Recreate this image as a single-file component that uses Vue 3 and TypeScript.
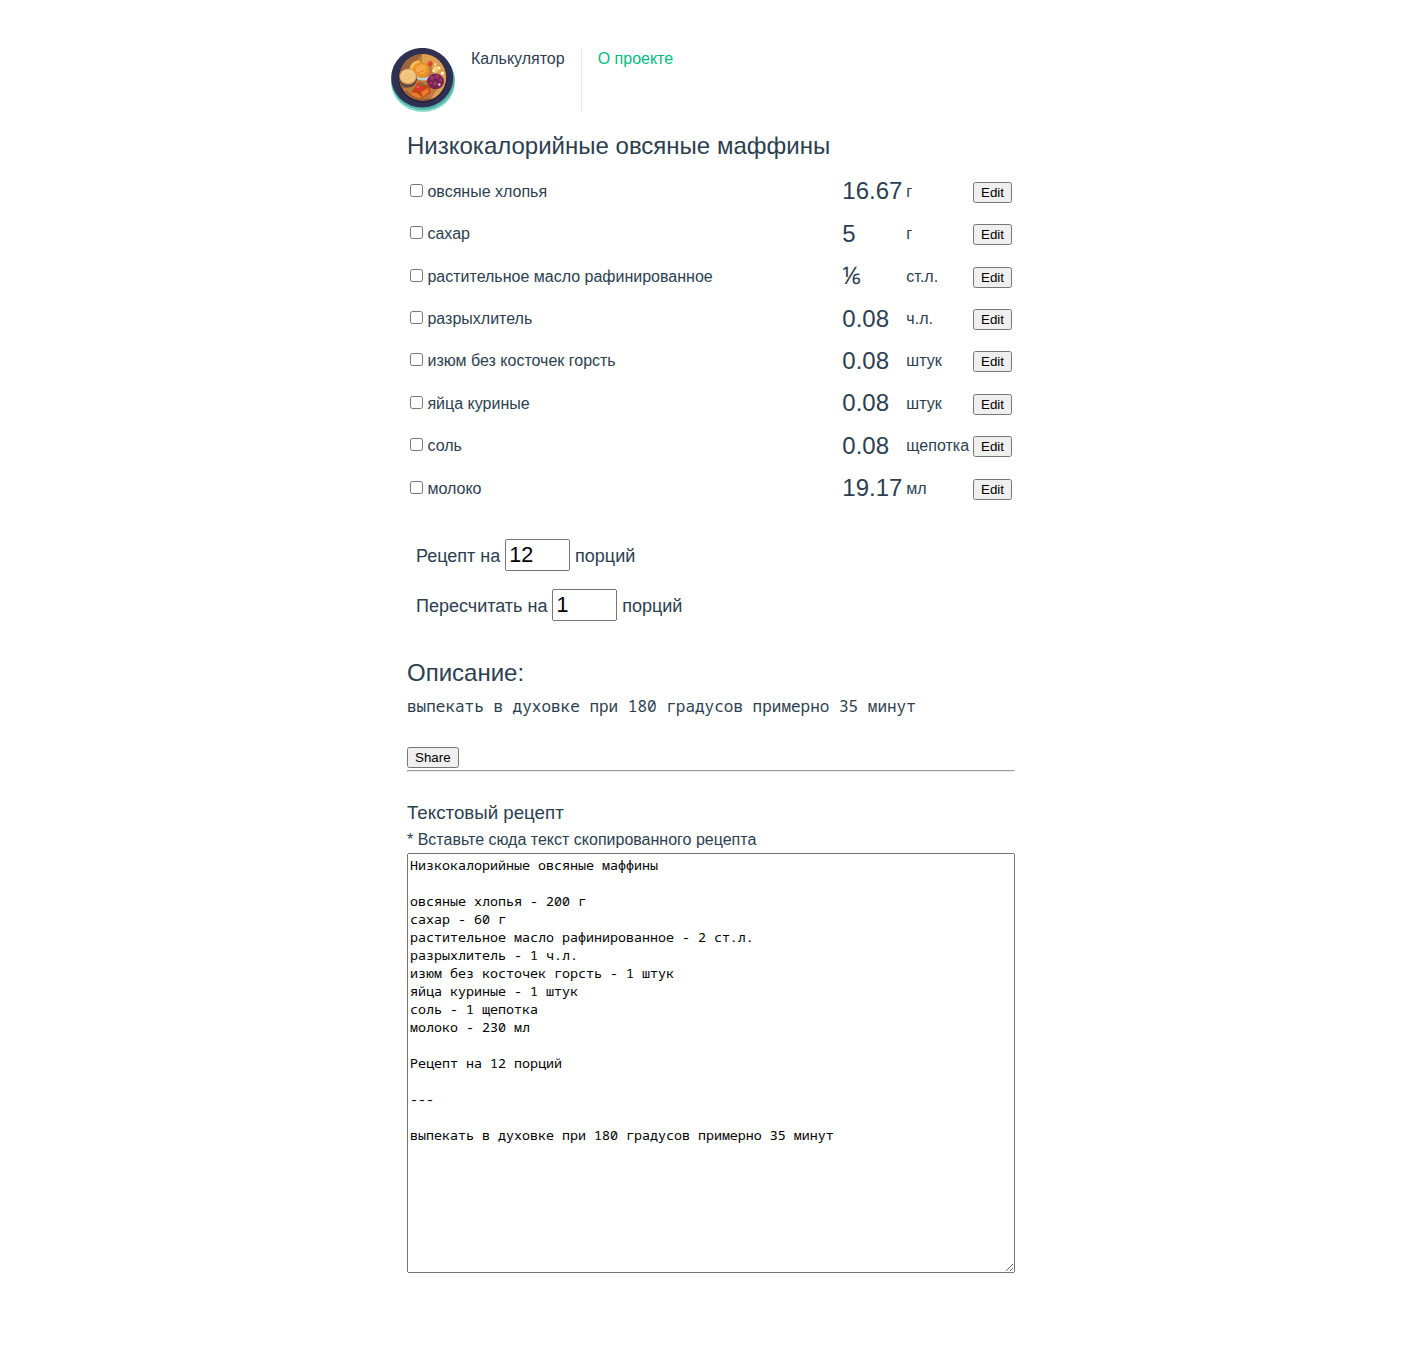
<script setup lang="ts">
import { ref } from 'vue'

interface Ingredient {
  name: string
  amount: string
  unit: string
}

const title = 'Низкокалорийные овсяные маффины'
const description = 'выпекать в духовке при 180 градусов примерно 35 минут'

const ingredients: Ingredient[] = [
  { name: 'овсяные хлопья', amount: '16.67', unit: 'г' },
  { name: 'сахар', amount: '5', unit: 'г' },
  { name: 'растительное масло рафинированное', amount: '⅙', unit: 'ст.л.' },
  { name: 'разрыхлитель', amount: '0.08', unit: 'ч.л.' },
  { name: 'изюм без косточек горсть', amount: '0.08', unit: 'штук' },
  { name: 'яйца куриные', amount: '0.08', unit: 'штук' },
  { name: 'соль', amount: '0.08', unit: 'щепотка' },
  { name: 'молоко', amount: '19.17', unit: 'мл' },
]

const portions = ref(12)
const target = ref(1)

const source = ref(`${title}

овсяные хлопья - 200 г
сахар - 60 г
растительное масло рафинированное - 2 ст.л.
разрыхлитель - 1 ч.л.
изюм без косточек горсть - 1 штук
яйца куриные - 1 штук
соль - 1 щепотка
молоко - 230 мл

Рецепт на 12 порций

---

${description}`)
</script>

<template>
  <div class="page">
    <header class="header">
      <svg class="logo" viewBox="0 0 64 64" aria-hidden="true">
        <defs>
          <clipPath id="board"><circle cx="31.7" cy="29.4" r="23.4" /></clipPath>
        </defs>
        <ellipse cx="32" cy="34" rx="32" ry="30" fill="#8fdccd" />
        <ellipse cx="32" cy="32" rx="31.8" ry="30" fill="#54b5aa" />
        <ellipse cx="31.2" cy="29.7" rx="31" ry="29.8" fill="#303052" />
        <circle cx="31.7" cy="30.4" r="24.4" fill="#28243f" />
        <g clip-path="url(#board)">
          <rect width="64" height="64" fill="#bd7b3f" />
          <path d="M8 6h23L20 20l-3 20H8z" fill="#9c6540" />
          <path d="M31 5v9l10 4 8 18-10 17h20V5z" fill="#dfa052" />
          <path d="M15 43q8 11 24 8" stroke="#a05c31" stroke-width="2" fill="none" />
        </g>
        <path d="M18 22q1-9 10-10l3 3-7 4-2 4z" fill="#f0a536" />
        <path d="M20 20q2-6 8-6" stroke="#ffca63" stroke-width="1.4" fill="none" />
        <path d="M23 25q8 10 21-1l-1 5q-8 6-17 2z" fill="#bdd5d6" />
        <circle cx="30.6" cy="22" r="7.7" fill="#ed922b" />
        <path d="M24.5 20q5-6 10-2 2 6-3 8-6 0-7-6z" fill="#f6aa43" />
        <path d="M27 25l7-3" stroke="#df8528" fill="none" />
        <ellipse cx="17" cy="31" rx="9" ry="8.6" fill="#614641" />
        <ellipse cx="17" cy="28.7" rx="8.6" ry="7.7" fill="#d99c58" />
        <ellipse cx="17" cy="28.2" rx="7.7" ry="6.9" fill="#f3c783" />
        <path d="M12 29l7-4M14 32l8-4" stroke="#e8b76e" stroke-width=".8" />
        <circle cx="39.2" cy="15.5" r="2.5" fill="#d94327" />
        <circle cx="38.5" cy="14.6" r=".7" fill="#ff9272" />
        <path d="M42 19l4-1 2 3-3 4-4-1z" fill="#f7ce6a" />
        <g fill="#fff0dc">
          <circle cx="44.2" cy="16.3" r="1.1" /><circle cx="48" cy="20" r="1.5" />
          <circle cx="51.4" cy="25.2" r="1.6" /><circle cx="42.6" cy="22.6" r="1.1" />
        </g>
        <ellipse cx="44.5" cy="33.4" rx="8.5" ry="7.8" fill="#78244f" />
        <g fill="#a13a6c">
          <circle cx="41" cy="30" r="2" /><circle cx="46" cy="28.5" r="1.9" />
          <circle cx="44" cy="35.5" r="2" /><circle cx="49.5" cy="32" r="1.6" />
          <circle cx="39.8" cy="35" r="1.3" />
        </g>
        <circle cx="48.3" cy="36.6" r="1.3" fill="#e9bddb" />
        <path d="M19.5 45l8-10 11 3 1 7-8 5q-6-2-12-5z" fill="#bd461d" />
        <path d="M20 44l6 1 5 4-3 1-7-3zM30 44l7-4 1 4-6 5z" fill="#ed7b2b" />
        <circle cx="28.9" cy="38.8" r="4.3" fill="#dd3928" />
        <path d="M27.5 35.5l3 1 2-2v3l-3 1z" fill="#5e812d" />
        <circle cx="27" cy="39" r=".9" fill="#ff8060" />
      </svg>
      <nav class="nav">
        <a class="link current">Калькулятор</a>
        <a class="link">О проекте</a>
      </nav>
    </header>

    <main class="content">
      <h1 class="title">{{ title }}</h1>
      <table class="ingredients">
        <tbody>
          <tr v-for="item in ingredients" :key="item.name">
            <td class="name"><label><input type="checkbox"> {{ item.name }}</label></td>
            <td class="amount">{{ item.amount }}</td>
            <td>{{ item.unit }}</td>
            <td><button type="button">Edit</button></td>
          </tr>
        </tbody>
      </table>

      <section class="portions">
        <div class="portion">Рецепт на <input v-model="portions" type="number"> порций</div>
        <div class="portion">Пересчитать на <input v-model="target" type="number"> порций</div>
      </section>

      <h2 class="title">Описание:</h2>
      <pre class="description">{{ description }}</pre>
      <div class="share"><button type="button">Share</button></div>
      <hr>

      <h3 class="subtitle">Текстовый рецепт</h3>
      <p class="hint">* Вставьте сюда текст скопированного рецепта</p>
      <textarea v-model="source" class="source" spellcheck="false"></textarea>
    </main>
  </div>
</template>

<style>
body {
  background: #fff;
}
</style>

<style scoped>
*,
*::before,
*::after {
  box-sizing: border-box;
  margin: 0;
  font-weight: normal;
}

.page {
  width: 640px;
  margin: 0 auto;
  padding-top: 48px;
  color: #2c3e50;
  font: 16px/1.6 "Liberation Sans", Arial, sans-serif;
}

.header {
  display: flex;
  height: 64px;
}

.logo {
  width: 64px;
  height: 64px;
  flex: none;
}

.nav {
  display: flex;
  line-height: 21px;
}

.link {
  padding: 0 16px;
  color: #00bd7e;
}

.link + .link {
  border-left: 1px solid rgba(60, 60, 60, 0.12);
}

.link.current {
  color: #2c3e50;
}

.content {
  padding: 15px 16px 0;
}

.title {
  font-size: 24px;
}

.ingredients {
  width: 100%;
  margin-top: 4px;
  white-space: nowrap;
}

.name {
  width: 100%;
}

.amount {
  font-size: 24px;
}

.portions {
  margin: 19px 0 24px;
  font-size: 18px;
}

.portion {
  padding: 9px;
}

.portion input {
  width: 3em;
  font-size: 1.2em;
}

button,
.portion input {
  font-family: "Liberation Sans", Arial, sans-serif;
}

.description,
.source {
  font-family: "Noto Sans Mono", "DejaVu Sans Mono", monospace;
}

.description {
  height: 26px;
  margin-top: 2px;
}

.share {
  height: 26px;
  margin-top: 24px;
}

.subtitle {
  margin-top: 26px;
  font-size: 1.17em;
}

.hint {
  margin: -0.8px 0 0.8px;
}

.source {
  display: block;
  width: 100%;
  height: 420px;
  line-height: 18px;
}
</style>
